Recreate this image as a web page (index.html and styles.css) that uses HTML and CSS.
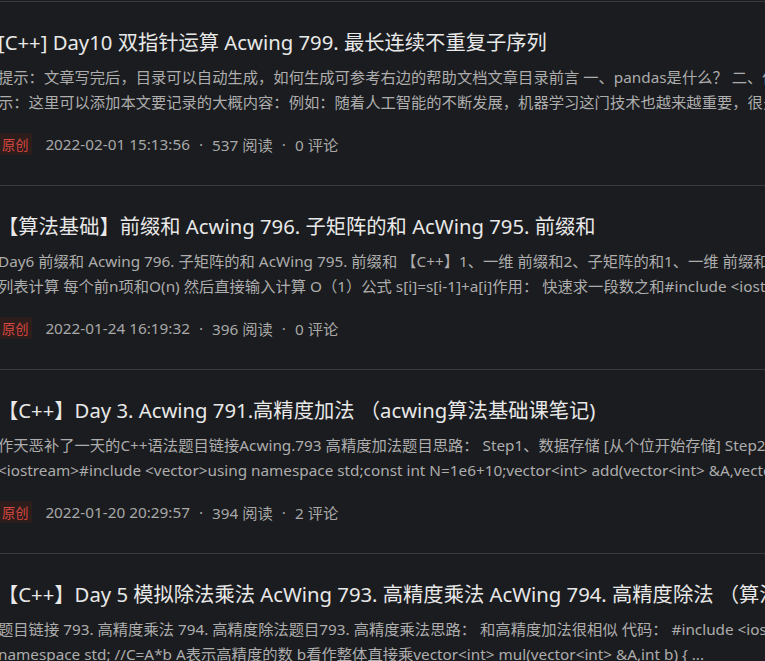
FILE: index.html
```html
<!DOCTYPE html>
<html lang="zh-CN">
<head>
<meta charset="utf-8">
<title>文章列表</title>
<link rel="stylesheet" href="styles.css">
</head>
<body>
<div class="article-list">
  <article class="article-item">
    <h4 class="article-title">[C++] Day10 双指针运算 Acwing 799. 最长连续不重复子序列</h4>
    <p class="article-desc">提示：文章写完后，目录可以自动生成，如何生成可参考右边的帮助文档文章目录前言 一、pandas是什么？ 二、使用步骤 1.引入库 2.读入数据 总结前言提<br>示：这里可以添加本文要记录的大概内容：例如：随着人工智能的不断发展，机器学习这门技术也越来越重要，很多人都开启了学习机器学习，本文就介绍了机器学习的基础内容。</p>
    <div class="article-meta">
      <span class="badge">原创</span>
      <span class="meta-item">2022-02-01 15:13:56</span>
      <span class="dot">·</span>
      <span class="meta-item">537 阅读</span>
      <span class="dot">·</span>
      <span class="meta-item">0 评论</span>
    </div>
  </article>
  <article class="article-item">
    <h4 class="article-title">【算法基础】前缀和 Acwing 796. 子矩阵的和 AcWing 795. 前缀和</h4>
    <p class="article-desc">Day6 前缀和 Acwing 796. 子矩阵的和 AcWing 795. 前缀和 【C++】1、一维 前缀和2、子矩阵的和1、一维 前缀和1.1 思路 前缀和 前缀和数组用<br>列表计算 每个前n项和O(n) 然后直接输入计算 O（1）公式 s[i]=s[i-1]+a[i]作用： 快速求一段数之和#include &lt;iostream&gt;using namespace std;</p>
    <div class="article-meta">
      <span class="badge">原创</span>
      <span class="meta-item">2022-01-24 16:19:32</span>
      <span class="dot">·</span>
      <span class="meta-item">396 阅读</span>
      <span class="dot">·</span>
      <span class="meta-item">0 评论</span>
    </div>
  </article>
  <article class="article-item">
    <h4 class="article-title">【C++】Day 3. Acwing 791.高精度加法 （acwing算法基础课笔记)</h4>
    <p class="article-desc">作天恶补了一天的C++语法题目链接Acwing.793 高精度加法题目思路： Step1、数据存储 [从个位开始存储] Step2、模拟加法过程 代码： #include<br>&lt;iostream&gt;#include &lt;vector&gt;using namespace std;const int N=1e6+10;vector&lt;int&gt; add(vector&lt;int&gt; &amp;A,vector&amp;l...</p>
    <div class="article-meta">
      <span class="badge">原创</span>
      <span class="meta-item">2022-01-20 20:29:57</span>
      <span class="dot">·</span>
      <span class="meta-item">394 阅读</span>
      <span class="dot">·</span>
      <span class="meta-item">2 评论</span>
    </div>
  </article>
  <article class="article-item">
    <h4 class="article-title">【C++】Day 5 模拟除法乘法 AcWing 793. 高精度乘法 AcWing 794. 高精度除法 （算法基础课笔记）</h4>
    <p class="article-desc">题目链接 793. 高精度乘法 794. 高精度除法题目793. 高精度乘法思路： 和高精度加法很相似 代码： #include &lt;iostream&gt;#include &lt;vector&gt;using<br>namespace std; //C=A*b A表示高精度的数 b看作整体直接乘vector&lt;int&gt; mul(vector&lt;int&gt; &amp;A,int b) { ...</p>
    <div class="article-meta">
      <span class="badge">原创</span>
      <span class="meta-item">2022-01-18 21:05:44</span>
      <span class="dot">·</span>
      <span class="meta-item">402 阅读</span>
      <span class="dot">·</span>
      <span class="meta-item">0 评论</span>
    </div>
  </article>
</div>
</body>
</html>
```
FILE: styles.css
```css
html, body {
  margin: 0;
  padding: 0;
  background: #1b1c1f;
  overflow: hidden;
}

body {
  font-family: "Noto Sans", "Noto Sans CJK SC", sans-serif;
  color: #e8e8e8;
}

.article-list {
  margin-left: -2px;
  padding-top: 1px;
  width: 1100px;
}

.article-item {
  border-top: 1px solid #3a3b3e;
  padding: 26px 0 30px;
}

.article-title {
  margin: 0;
  font-size: 20.3px;
  line-height: 28px;
  font-weight: 400;
  color: #e8e8e8;
  white-space: nowrap;
}

.article-desc {
  margin: 9px 0 0;
  font-size: 15.3px;
  line-height: 25px;
  color: #adadad;
  white-space: nowrap;
}

.article-meta {
  margin-top: 18px;
  display: flex;
  align-items: center;
  height: 22px;
  font-size: 15.3px;
  color: #a8a8a8;
}

.badge {
  display: inline-flex;
  align-items: center;
  height: 22px;
  padding: 0 4px;
  font-size: 13.2px;
  background: #2e1d1d;
  color: #d9483f;
  border-radius: 2px;
  margin-right: 13px;
}

.dot {
  margin: 0 9px;
}
```
